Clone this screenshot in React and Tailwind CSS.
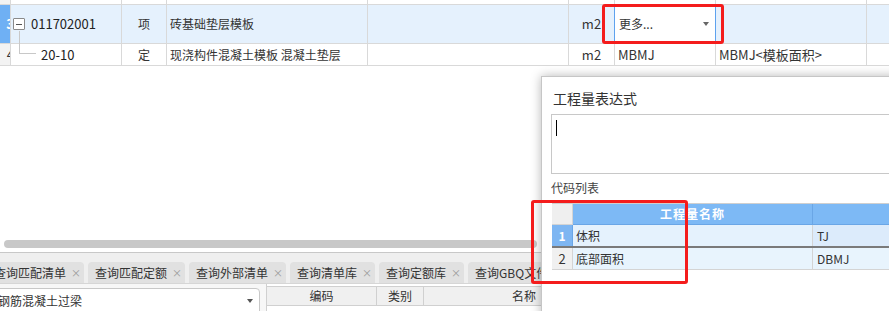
import React from "react";

const F = { fontFamily: '"Noto Sans CJK SC", "Noto Sans", sans-serif' };

function Cell({ className = "", children }) {
  return (
    <div className={`border-r border-b border-[#d9d9d9] flex items-center overflow-hidden whitespace-nowrap ${className}`}>
      {children}
    </div>
  );
}

function Tab({ label, className = "" }) {
  return (
    <div className={`h-[21px] shrink-0 rounded-t-[4px] bg-[#e1e1e1] flex items-center pl-[7px] pr-[5px] gap-[7px] text-[12px] text-[#333] ${className}`}>
      <span className="whitespace-nowrap">{label}</span>
      <span className="w-[6px] text-[10px] text-[#9a9a9a] leading-none flex justify-center">×</span>
    </div>
  );
}

export default function App() {
  return (
    <div className="relative w-[889px] h-[311px] overflow-hidden bg-white text-[#333]" style={F}>
      {/* top grid */}
      <div className="grid grid-cols-[11px_111px_45px_201px_201px_46px_101px_151px_60px] w-[927px] text-[12px]">
        {/* row 0 partial */}
        <Cell className="h-[5px] bg-[#f3f3f3]" />
        <Cell className="h-[5px]" />
        <Cell className="h-[5px]" />
        <Cell className="h-[5px]" />
        <Cell className="h-[5px]" />
        <Cell className="h-[5px]" />
        <Cell className="h-[5px]" />
        <Cell className="h-[5px]" />
        <Cell className="h-[5px]" />
        {/* row 1 */}
        <Cell className="h-[39px] bg-[#6fb0f4] justify-end">
          <span className="text-white font-bold text-[13px] mr-[-4px]">3</span>
        </Cell>
        <Cell className="h-[39px] bg-[#e5f1fd] pl-[2px] gap-[6px] relative">
          <span className="w-[12px] h-[12px] border border-[#8a8a8a] rounded-[1px] bg-white flex items-center justify-center">
            <span className="w-[6px] h-[1px] bg-[#555]" />
          </span>
          <span className="text-[13px] text-[#222]">011702001</span>
        </Cell>
        <Cell className="h-[39px] bg-[#e5f1fd] justify-center">项</Cell>
        <Cell className="h-[39px] bg-[#e5f1fd] pl-[3px]">砖基础垫层模板</Cell>
        <Cell className="h-[39px] bg-[#e5f1fd]" />
        <Cell className="h-[39px] bg-[#e5f1fd] justify-center text-[13px]">m2</Cell>
        <Cell className="h-[39px] bg-white border-l border-l-[#5ea2ee] border-r-[#5ea2ee] -ml-px pl-[4px] pr-[6px] justify-between">
          <span>更多...</span>
          <span className="w-0 h-0 border-l-[3px] border-r-[3px] border-t-[4px] border-l-transparent border-r-transparent border-t-[#666]" />
        </Cell>
        <Cell className="h-[39px] bg-[#e5f1fd]" />
        <Cell className="h-[39px] bg-[#e5f1fd]" />
        {/* row 2 */}
        <Cell className="h-[22px] bg-[#f3f3f3] justify-end">
          <span className="text-[13px] mr-[-4px]">4</span>
        </Cell>
        <Cell className="h-[22px] pl-[30px] text-[13px] text-[#222]">20-10</Cell>
        <Cell className="h-[22px] justify-center">定</Cell>
        <Cell className="h-[22px] pl-[3px]">现浇构件混凝土模板 混凝土垫层</Cell>
        <Cell className="h-[22px]" />
        <Cell className="h-[22px] justify-center text-[13px]">m2</Cell>
        <Cell className="h-[22px] pl-[3px] text-[13px]">MBMJ</Cell>
        <Cell className="h-[22px] pl-[3px] text-[13px]">MBMJ&lt;模板面积&gt;</Cell>
        <Cell className="h-[22px]" />
      </div>

      {/* tree connector */}
      <div className="absolute left-[19px] top-[31px] w-[17px] h-[23px] border-l border-b border-[#c8c8c8]" />

      {/* empty space */}
      <div className="h-[174px]" />

      {/* horizontal scrollbar */}
      <div className="ml-[4px] w-[533px] h-[8px] rounded-full bg-[#c8c8c8]" />
      <div className="h-[4px]" />

      {/* bottom area */}
      <div className="border-t border-[#c8c8c8] bg-[#efefef] h-[59px] flex flex-col">
        <div className="flex gap-[4px] pt-[9px]">
          <Tab label="查询匹配清单" className="ml-[-13px]" />
          <Tab label="查询匹配定额" />
          <Tab label="查询外部清单" />
          <Tab label="查询清单库" />
          <Tab label="查询定额库" />
          <Tab label="查询GBQ文件" />
        </div>
        <div className="flex-1 bg-[#f7f7f7] border-t border-[#d6d6d6] flex">
          <div className="ml-[-4px] w-[264px] mt-[4px] h-[30px] bg-white border border-[#c8c8c8] rounded-[4px] flex items-start pt-[3px] pl-[1px] pr-[6px] justify-between text-[12px]">
            <span>钢筋混凝土过梁</span>
            <span className="mt-[7px] w-0 h-0 border-l-[3px] border-r-[3px] border-t-[4px] border-l-transparent border-r-transparent border-t-[#555]" />
          </div>
          <div className="ml-[6px] w-[1px] bg-[#d0d0d0]" />
          <div className="flex-1 bg-white">
            <div className="mt-[2px] h-[20px] flex bg-[#f0f0f0] border-y border-[#d0d0d0] text-[12px]">
              <div className="w-[110px] border-r border-[#d0d0d0] flex items-center justify-center">编码</div>
              <div className="w-[47px] border-r border-[#d0d0d0] flex items-center justify-center">类别</div>
              <div className="flex-1 flex items-center pl-[88px]">名称</div>
            </div>
          </div>
        </div>
      </div>

      {/* dialog */}
      <div className="absolute left-[541px] top-[76px] w-[380px] h-[260px] bg-white border border-[#c6c6c6] shadow-[0_0_10px_rgba(0,0,0,0.28)]">
        <div className="pl-[11px] pt-[11px] text-[14px] leading-[20px] text-[#333]">工程量表达式</div>
        <div className="ml-[9px] mt-[6px] h-[60px] border border-[#c8c8c8] pl-[4px] pt-[5px]">
          <div className="w-[1px] h-[16px] bg-black" />
        </div>
        <div className="pl-[9px] mt-[6px] text-[12px] leading-[16px] text-[#444]">代码列表</div>
        <div className="ml-[10px] mt-[7px] border-t border-[#cfcfcf] text-[12px]">
          <div className="flex h-[21px]">
            <div className="w-[21px] shrink-0 bg-[#efefef] border-r border-b border-[#d4d4d4]" />
            <div className="w-[240px] shrink-0 bg-[#7db9f5] border-r border-b border-[#6aa6e6] flex items-center justify-center text-white font-bold tracking-[1px]">工程量名称</div>
            <div className="flex-1 bg-[#7db9f5] border-b border-[#6aa6e6]" />
          </div>
          <div className="flex h-[21px]">
            <div className="w-[21px] shrink-0 bg-[#7eb6f2] border-r border-[#6aa6e6] flex items-center justify-center text-white font-bold">1</div>
            <div className="w-[240px] shrink-0 bg-[#e5f2fd] border-r border-[#d4d4d4] flex items-center pl-[3px]">体积</div>
            <div className="flex-1 bg-[#dcebfb] flex items-center pl-[4px]">TJ</div>
          </div>
          <div className="h-[2px] bg-[#7a7a7a]" />
          <div className="flex h-[22px]">
            <div className="w-[21px] shrink-0 bg-[#f0f0f0] border-r border-b border-[#d4d4d4] flex items-center justify-center text-[13px]">2</div>
            <div className="w-[240px] shrink-0 bg-[#e8f4fd] border-r border-b border-[#d4d4d4] flex items-center pl-[3px]">底部面积</div>
            <div className="flex-1 bg-[#e8f4fd] border-b border-[#d4d4d4] flex items-center pl-[4px]">DBMJ</div>
          </div>
        </div>
      </div>

      {/* red highlight boxes */}
      <div className="absolute left-[602px] top-[4px] w-[122px] h-[40px] border-[3px] border-[#f41c1c] rounded-[3px]" />
      <div className="absolute left-[531px] top-[200px] w-[157px] h-[84px] border-[3px] border-[#f41c1c] rounded-[3px]" />
    </div>
  );
}
